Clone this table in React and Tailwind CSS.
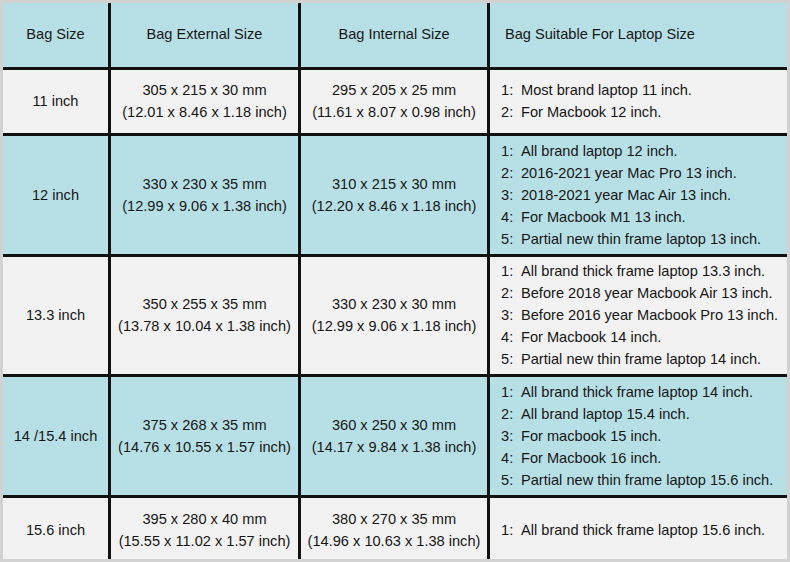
import React from "react";

const rows = [
  {
    size: "11 inch",
    ext: ["305 x 215 x 30 mm", "(12.01 x 8.46 x 1.18 inch)"],
    int: ["295 x 205 x 25 mm", "(11.61 x 8.07 x 0.98 inch)"],
    fit: ["Most brand laptop 11 inch.", "For Macbook 12 inch."],
    blue: false,
    pad: "pb-[1px]",
  },
  {
    size: "12 inch",
    ext: ["330 x 230 x 35 mm", "(12.99 x 9.06 x 1.38 inch)"],
    int: ["310 x 215 x 30 mm", "(12.20 x 8.46 x 1.18 inch)"],
    fit: [
      "All brand laptop 12 inch.",
      "2016-2021 year Mac Pro 13 inch.",
      "2018-2021 year Mac Air 13 inch.",
      "For Macbook M1 13 inch.",
      "Partial new thin frame laptop 13 inch.",
    ],
    blue: true,
    pad: "pb-[1px]",
  },
  {
    size: "13.3 inch",
    ext: ["350 x 255 x 35 mm", "(13.78 x 10.04 x 1.38 inch)"],
    int: ["330 x 230 x 30 mm", "(12.99 x 9.06 x 1.18 inch)"],
    fit: [
      "All brand thick frame laptop 13.3 inch.",
      "Before 2018 year Macbook Air 13 inch.",
      "Before 2016 year Macbook Pro 13 inch.",
      "For Macbook 14 inch.",
      "Partial new thin frame laptop 14 inch.",
    ],
    blue: false,
    pad: "pb-[1px]",
  },
  {
    size: "14 /15.4 inch",
    ext: ["375 x 268 x 35 mm", "(14.76 x 10.55 x 1.57 inch)"],
    int: ["360 x 250 x 30 mm", "(14.17 x 9.84 x 1.38 inch)"],
    fit: [
      "All brand thick frame laptop 14 inch.",
      "All brand laptop 15.4 inch.",
      "For macbook 15 inch.",
      "For Macbook 16 inch.",
      "Partial new thin frame laptop 15.6 inch.",
    ],
    blue: true,
    pad: "pb-[1px]",
  },
  {
    size: "15.6 inch",
    ext: ["395 x 280 x 40 mm", "(15.55 x 11.02 x 1.57 inch)"],
    int: ["380 x 270 x 35 mm", "(14.96 x 10.63 x 1.38 inch)"],
    fit: ["All brand thick frame laptop 15.6 inch."],
    blue: false,
    pad: "pt-[3px]",
  },
];

function Cell({ blue, className = "", children }) {
  return (
    <div
      className={
        (blue ? "bg-[#b7e0e6] " : "bg-[#f2f2f2] ") +
        "flex flex-col justify-center " +
        className
      }
    >
      {children}
    </div>
  );
}

export default function App() {
  return (
    <div
      className="w-[790px] h-[562px] bg-[#d2d2d2] p-[3px] text-[14.6px] leading-[22px] text-[#161616]"
      style={{ fontFamily: '"Liberation Sans", Arial, sans-serif' }}
    >
      <div className="grid h-full grid-cols-[105px_187px_186px_1fr] grid-rows-[64px_63px_118px_117px_118px_1fr] gap-[3px] bg-[#111]">
        <Cell blue className="items-center pb-[2px]">Bag Size</Cell>
        <Cell blue className="items-center pb-[2px]">Bag External Size</Cell>
        <Cell blue className="items-center pb-[2px]">Bag Internal Size</Cell>
        <Cell blue className="pl-[15px] pb-[2px]">Bag Suitable For Laptop Size</Cell>
        {rows.map((r) => (
          <React.Fragment key={r.size}>
            <Cell blue={r.blue} className={"items-center " + r.pad}>{r.size}</Cell>
            <Cell blue={r.blue} className={"items-center " + r.pad}>
              {r.ext.map((t) => (
                <div key={t} className="whitespace-nowrap">{t}</div>
              ))}
            </Cell>
            <Cell blue={r.blue} className={"items-center " + r.pad}>
              {r.int.map((t) => (
                <div key={t} className="whitespace-nowrap">{t}</div>
              ))}
            </Cell>
            <Cell blue={r.blue} className={"pl-[11px] " + r.pad}>
              {r.fit.map((t, i) => (
                <div key={t} className="flex whitespace-nowrap">
                  <span className="w-[20px] shrink-0">{i + 1}:</span>
                  <span>{t}</span>
                </div>
              ))}
            </Cell>
          </React.Fragment>
        ))}
      </div>
    </div>
  );
}
